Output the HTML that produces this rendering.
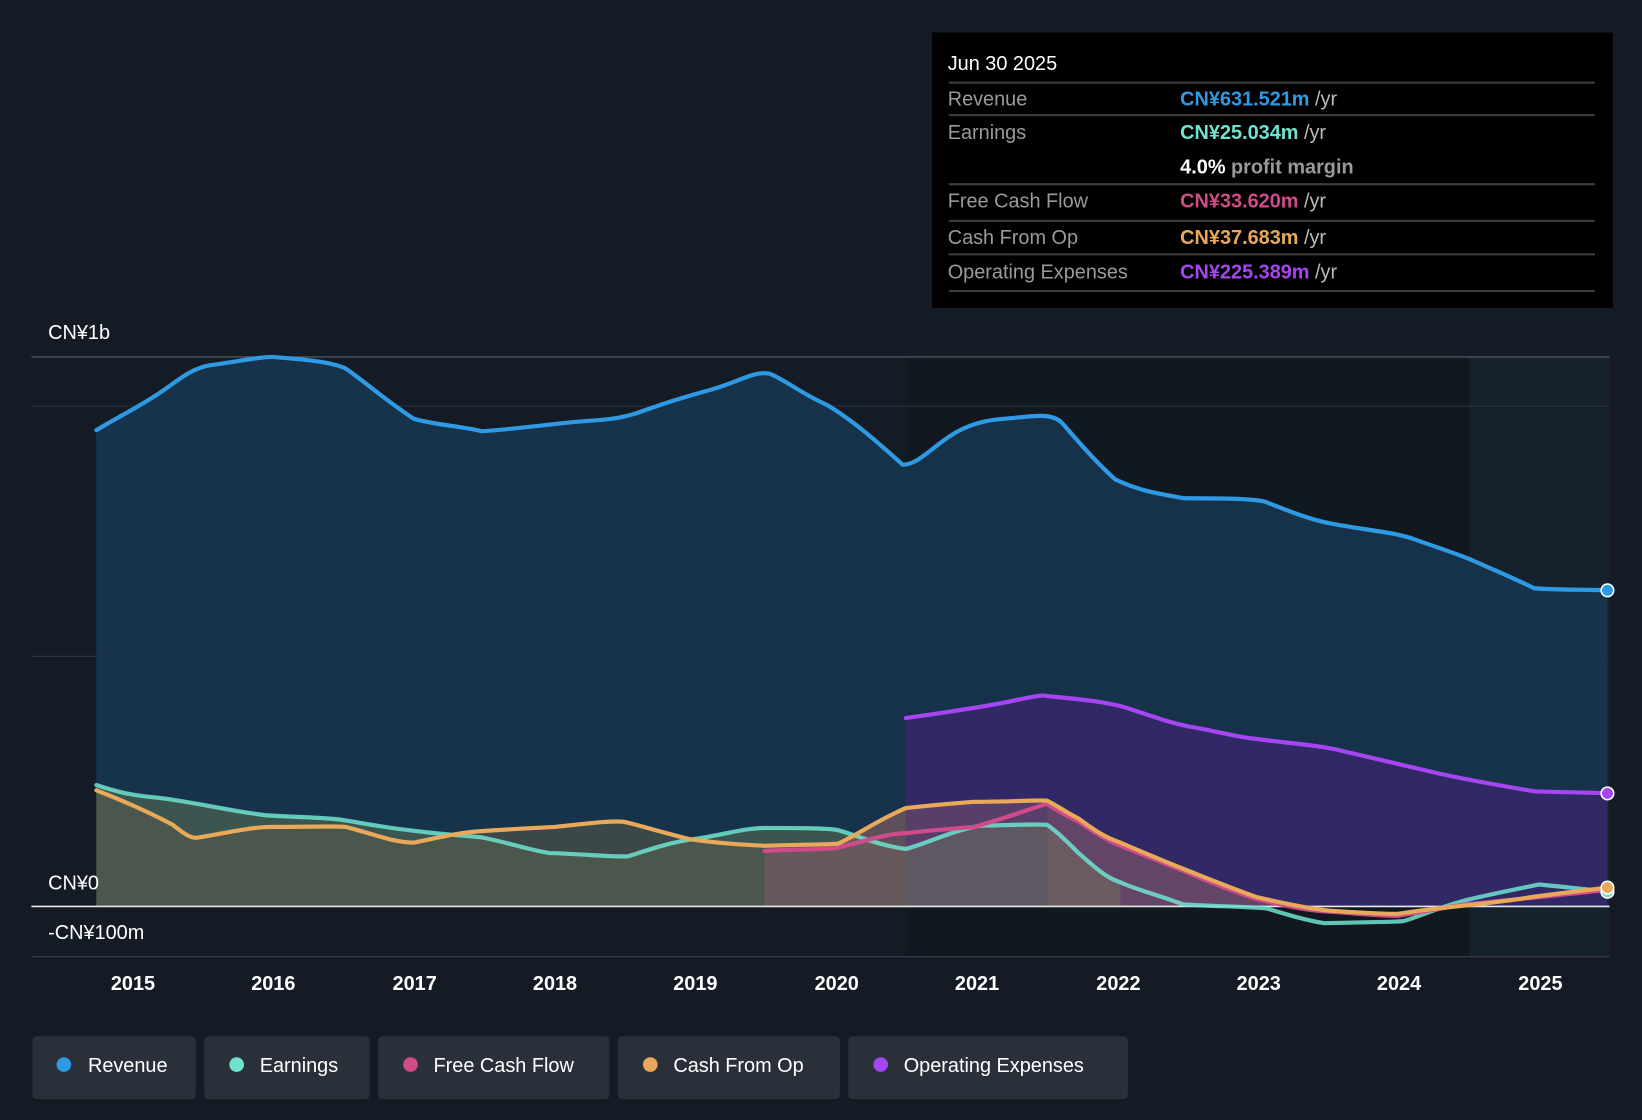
<!DOCTYPE html>
<html><head><meta charset="utf-8"><style>
html,body{margin:0;padding:0;background:#151b24;}
svg{display:block}
text{font-family:"Liberation Sans",sans-serif;}
</style></head><body>
<svg width="1642" height="1120" viewBox="0 0 1568 1070" preserveAspectRatio="none" xmlns="http://www.w3.org/2000/svg">
<rect width="1568" height="1070" fill="#151b24"/>
<!-- darker past-region from 865 -->
<rect x="865" y="341" width="672" height="573" fill="#111820"/>
<rect x="1403" y="341" width="134" height="573" fill="#1a2838" opacity="0.6"/>
<!-- grid -->
<g stroke="#2c3440" stroke-width="1">
<line x1="30" y1="341" x2="1537" y2="341" stroke="#5a626d"/>
<line x1="30" y1="388" x2="1537" y2="388"/>
<line x1="30" y1="627" x2="1537" y2="627"/>
<line x1="30" y1="914" x2="1537" y2="914" stroke="#3a424d"/>
</g>
<!-- revenue area -->
<path d="M92,411 C110,400 130,390 150,377 C170,364 180,353 200,349 C225,346 245,341 260,341 C285,343 315,345 330,352 C345,362 365,380 395,400 C415,406 440,407 460,412 C480,411 520,406 550,403 C575,401 590,401 610,394 C630,387 650,380 680,372 C705,365 720,354 735,357 C750,363 765,376 790,387 C815,402 840,424 862,444 C875,444 885,432 905,418 C925,404 945,401 960,400 C985,398 1005,393 1015,405 C1030,422 1045,440 1065,458 C1090,470 1110,472 1130,476 C1160,476 1200,476 1210,480 C1230,488 1250,496 1270,500 C1300,506 1330,508 1350,515 C1375,524 1395,530 1410,537 C1430,546 1445,552 1465,562 C1490,564 1515,563 1535,564 L1535,866 L92,866 Z" fill="#173550" opacity="0.9"/>
<!-- opex area -->
<path d="M865,686 C900,681 930,677 960,671 C980,667 995,663 1000,665 C1030,668 1055,670 1075,676 C1100,684 1115,690 1135,694 C1160,698 1180,704 1200,706 C1230,710 1260,712 1280,717 C1310,724 1340,731 1370,738 C1400,745 1430,750 1465,756 C1490,757 1515,757 1535,758 L1535,866 L865,866 Z" fill="#35286a" opacity="0.85"/>
<!-- earnings/cash area -->
<path d="M92,750 C110,756 125,760 150,762 C190,767 220,775 255,779 C290,781 310,781 325,783 C350,787 370,791 390,793 C420,797 440,798 460,800 C490,806 505,812 525,815 C560,816 585,819 600,818 C625,810 640,805 660,802 C690,798 710,791 730,791 C760,791 790,791 800,793 C815,797 840,808 865,811 C885,806 905,795 935,789 C970,788 990,787 1000,788 C1010,795 1020,805 1030,815 C1045,828 1055,838 1070,843 L1070,866 L92,866 Z" fill="#3f5a52" opacity="0.9"/>
<path d="M92,755 C110,762 135,772 165,788 C175,796 183,802 190,800 C220,795 240,790 260,790 C300,790 320,789 330,790 C355,796 375,805 395,805 C420,800 440,795 460,794 C490,792 510,791 530,790 C560,787 580,784 595,785 C610,788 620,792 660,802 C690,806 710,807 730,808 C760,807 785,807 800,806 C815,800 835,785 865,772 L865,866 L92,866 Z" fill="#5a5a48" opacity="0.55"/>
<path d="M730,813 L730,866 L1000,866 L1000,766 C960,766 930,766 865,772 C840,785 815,800 800,806 Z" fill="#8a5a70" opacity="0.45"/>
<path d="M1000,766 C1030,782 1050,795 1070,805 C1100,818 1130,830 1160,842 C1180,850 1200,857 1230,863 L1230,866 L1000,866 Z" fill="#9a6070" opacity="0.5"/>
<!-- zero line -->
<line x1="30" y1="866" x2="1537" y2="866" stroke="#e8e8e8" stroke-width="1.5"/>
<!-- lines -->
<g fill="none" stroke-width="4" stroke-linecap="round">
<path d="M92,411 C110,400 130,390 150,377 C170,364 180,353 200,349 C225,346 245,341 260,341 C285,343 315,345 330,352 C345,362 365,380 395,400 C415,406 440,407 460,412 C480,411 520,406 550,403 C575,401 590,401 610,394 C630,387 650,380 680,372 C705,365 720,354 735,357 C750,363 765,376 790,387 C815,402 840,424 862,444 C875,444 885,432 905,418 C925,404 945,401 960,400 C985,398 1005,393 1015,405 C1030,422 1045,440 1065,458 C1090,470 1110,472 1130,476 C1160,476 1200,476 1210,480 C1230,488 1250,496 1270,500 C1300,506 1330,508 1350,515 C1375,524 1395,530 1410,537 C1430,546 1445,552 1465,562 C1490,564 1515,563 1535,564" stroke="#2e9ae3"/>
<path d="M865,686 C900,681 930,677 960,671 C980,667 995,663 1000,665 C1030,668 1055,670 1075,676 C1100,684 1115,690 1135,694 C1160,698 1180,704 1200,706 C1230,710 1260,712 1280,717 C1310,724 1340,731 1370,738 C1400,745 1430,750 1465,756 C1490,757 1515,757 1535,758" stroke="#a546f0"/>
<path d="M92,750 C110,756 125,760 150,762 C190,767 220,775 255,779 C290,781 310,781 325,783 C350,787 370,791 390,793 C420,797 440,798 460,800 C490,806 505,812 525,815 C560,816 585,819 600,818 C625,810 640,805 660,802 C690,798 710,791 730,791 C760,791 790,791 800,793 C815,797 840,808 865,811 C885,806 905,795 935,789 C970,788 990,787 1000,788 C1010,795 1020,805 1030,815 C1045,828 1055,838 1070,843 C1085,850 1100,853 1130,864 C1160,866 1190,866 1210,868 C1230,874 1250,880 1265,882 C1300,881 1330,881 1340,880 C1355,876 1370,868 1400,860 C1420,855 1440,851 1470,845 C1500,848 1520,850 1535,852" stroke="#6fe3cf" opacity="0.85"/>
<path d="M730,813 C760,811 790,812 800,810 C830,802 850,796 865,796 C900,792 920,791 930,790 C960,782 985,772 1000,768 C1010,775 1020,780 1030,785 C1045,795 1055,802 1070,808 C1100,820 1110,824 1130,832 C1160,845 1180,852 1200,859 C1230,866 1250,870 1270,871 C1300,873 1320,875 1335,875 C1360,871 1380,867 1400,864 C1430,861 1450,859 1470,857 C1500,854 1520,852 1535,850" stroke="#d14b8a"/>
<path d="M92,755 C110,762 135,772 165,788 C175,796 183,802 190,800 C220,795 240,790 260,790 C300,790 320,789 330,790 C355,796 375,805 395,805 C420,800 440,795 460,794 C490,792 510,791 530,790 C560,787 580,784 595,785 C610,788 620,792 660,802 C690,806 710,807 730,808 C760,807 785,807 800,806 C815,800 835,785 865,772 C900,768 920,767 930,766 C970,766 990,764 1000,765 C1010,770 1020,777 1030,782 C1045,793 1055,800 1070,805 C1100,818 1110,822 1130,830 C1160,842 1180,850 1200,857 C1230,864 1250,868 1270,870 C1300,872 1320,873 1335,873 C1360,869 1380,867 1400,865 C1430,862 1450,859 1470,856 C1500,852 1520,850 1535,848" stroke="#e8a95a"/>
</g>
<g stroke="#fff" stroke-width="1.5">
<circle cx="1535" cy="564" r="6" fill="#2e9ae3"/>
<circle cx="1535" cy="758" r="6" fill="#a546f0"/>
<circle cx="1535" cy="852" r="6" fill="#6fe3cf"/>
<circle cx="1535" cy="848" r="6" fill="#e8a95a"/>
</g>
<!-- axis labels -->
<g fill="#fff" font-size="19">
<text x="46" y="324">CN¥1b</text>
<text x="46" y="850">CN¥0</text>
<text x="46" y="897">-CN¥100m</text>
</g>
<g fill="#fff" font-size="19" text-anchor="middle" font-weight="bold">
<text x="127" y="946">2015</text><text x="261" y="946">2016</text><text x="396" y="946">2017</text><text x="530" y="946">2018</text><text x="664" y="946">2019</text><text x="799" y="946">2020</text><text x="933" y="946">2021</text><text x="1068" y="946">2022</text><text x="1202" y="946">2023</text><text x="1336" y="946">2024</text><text x="1471" y="946">2025</text>
</g>
<!-- tooltip -->
<rect x="890" y="31" width="650" height="263" fill="#000"/>
<g stroke="#3e3e3e" stroke-width="2">
<line x1="906" y1="79" x2="1523" y2="79"/><line x1="906" y1="110" x2="1523" y2="110"/><line x1="906" y1="176" x2="1523" y2="176"/><line x1="906" y1="211" x2="1523" y2="211"/><line x1="906" y1="243" x2="1523" y2="243"/><line x1="906" y1="278" x2="1523" y2="278"/>
</g>
<g font-size="19">
<text x="905" y="67" fill="#fff">Jun 30 2025</text>
<text x="905" y="101" fill="#9a9a9a">Revenue</text>
<text x="905" y="133" fill="#9a9a9a">Earnings</text>
<text x="905" y="198" fill="#9a9a9a">Free Cash Flow</text>
<text x="905" y="233" fill="#9a9a9a">Cash From Op</text>
<text x="905" y="266" fill="#9a9a9a">Operating Expenses</text>
<text x="1127" y="101" font-weight="bold" fill="#2e9ae3">CN¥631.521m <tspan fill="#bbb" font-weight="normal">/yr</tspan></text>
<text x="1127" y="133" font-weight="bold" fill="#6fe3cf">CN¥25.034m <tspan fill="#bbb" font-weight="normal">/yr</tspan></text>
<text x="1127" y="166" font-weight="bold" fill="#fff">4.0% <tspan fill="#9a9a9a">profit margin</tspan></text>
<text x="1127" y="198" font-weight="bold" fill="#d14b8a">CN¥33.620m <tspan fill="#bbb" font-weight="normal">/yr</tspan></text>
<text x="1127" y="233" font-weight="bold" fill="#e8a95a">CN¥37.683m <tspan fill="#bbb" font-weight="normal">/yr</tspan></text>
<text x="1127" y="266" font-weight="bold" fill="#a546f0">CN¥225.389m <tspan fill="#bbb" font-weight="normal">/yr</tspan></text>
</g>
<!-- legend -->
<g font-size="19" fill="#fff">
<rect x="31" y="990" width="156" height="60" rx="4" fill="#2a303a"/><circle cx="61" cy="1017" r="7" fill="#2e9ae3"/><text x="84" y="1024">Revenue</text>
<rect x="195" y="990" width="158" height="60" rx="4" fill="#2a303a"/><circle cx="226" cy="1017" r="7" fill="#6fe3cf"/><text x="248" y="1024">Earnings</text>
<rect x="361" y="990" width="221" height="60" rx="4" fill="#2a303a"/><circle cx="392" cy="1017" r="7" fill="#d14b8a"/><text x="414" y="1024">Free Cash Flow</text>
<rect x="590" y="990" width="212" height="60" rx="4" fill="#2a303a"/><circle cx="621" cy="1017" r="7" fill="#e8a95a"/><text x="643" y="1024">Cash From Op</text>
<rect x="810" y="990" width="267" height="60" rx="4" fill="#2a303a"/><circle cx="841" cy="1017" r="7" fill="#a546f0"/><text x="863" y="1024">Operating Expenses</text>
</g>
</svg>
</body></html>
